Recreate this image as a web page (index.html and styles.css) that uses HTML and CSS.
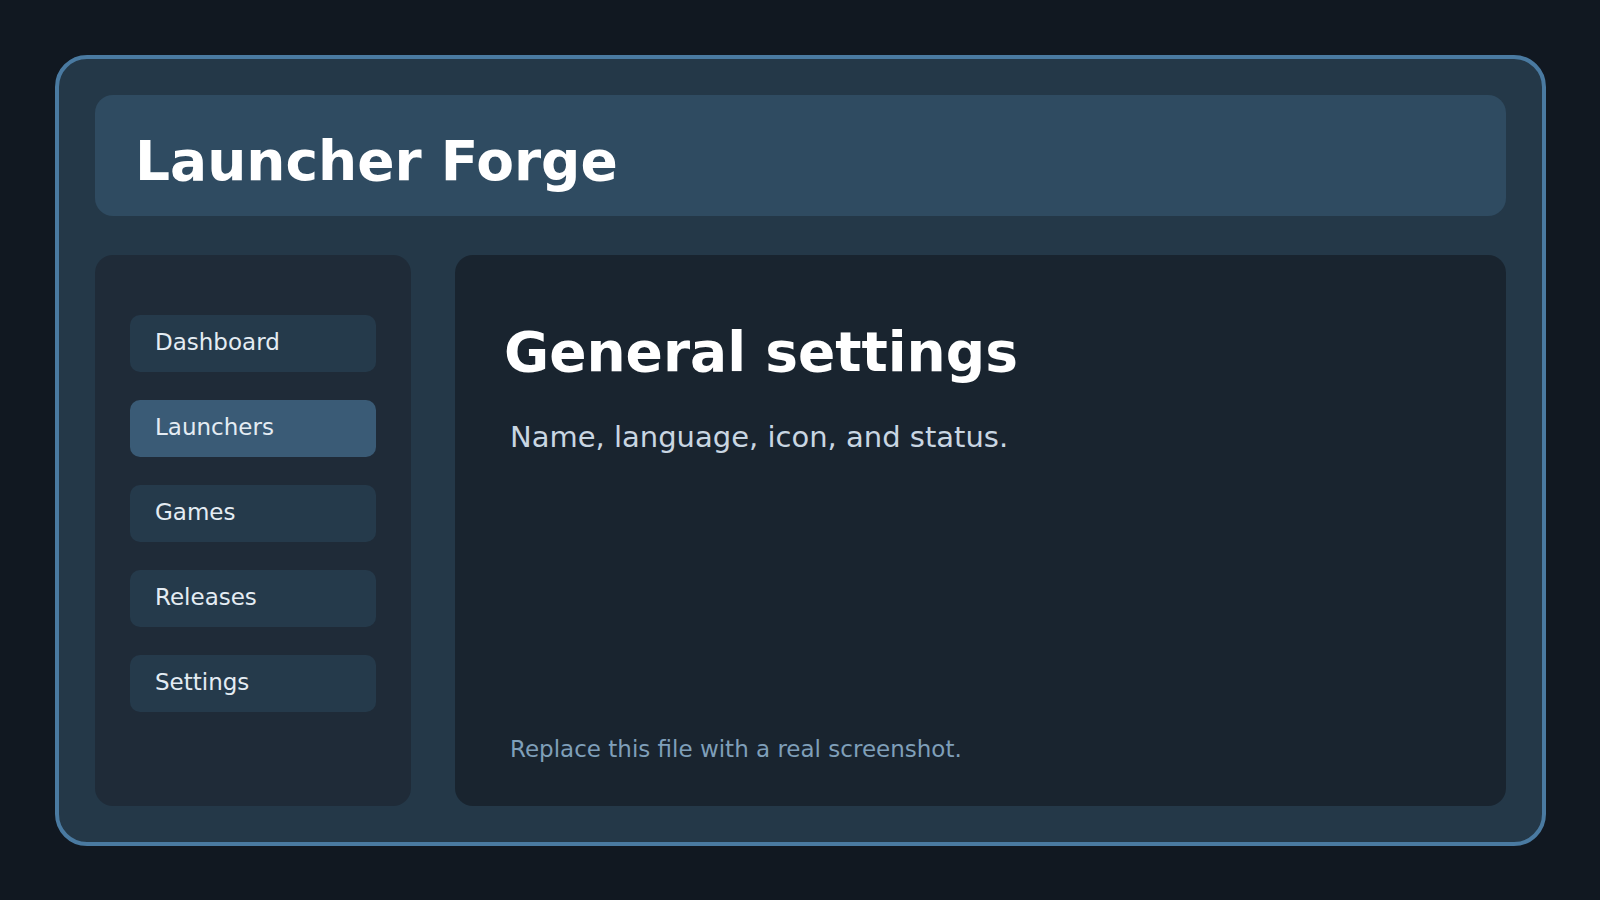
FILE: index.html
```html
<!DOCTYPE html>
<html lang="en">
<head>
  <meta charset="UTF-8">
  <title>Launcher Forge</title>
  <link rel="stylesheet" href="styles.css">
</head>
<body>
<div class="frame">
  <div class="header">
    <h1>Launcher Forge</h1>
  </div>
  <div class="body">
    <ul class="nav">
      <li>Dashboard</li>
      <li class="current">Launchers</li>
      <li>Games</li>
      <li>Releases</li>
      <li>Settings</li>
    </ul>
    <div class="main">
      <h2>General settings</h2>
      <p class="sub">Name, language, icon, and status.</p>
      <p class="note">Replace this file with a real screenshot.</p>
    </div>
  </div>
</div>
</body>
</html>
```

FILE: styles.css
```css
* {
  margin: 0;
  padding: 0;
  box-sizing: border-box;
}

ul {
  list-style: none
}

body {
  background-color: #111821;
  font-family: "DejaVu Sans", sans-serif;
  width: 1600px;
  height: 900px;
  overflow: hidden;
}

.frame {
  margin: 55px 0 0 55px;
  width: 1491px;
  height: 791px;
  padding: 36px;
  border: 4px solid #4a7aa1;
  border-radius: 32px;
  background-color: #243848;
  display: flex;
  flex-direction: column;
  gap: 39px;
}

.header {
  height: 121px;
  padding: 38px 40px 27px;
  background-color: #2f4b61;
  border-radius: 18px;
}

.header h1 {
  font-size: 55px;
  line-height: 56px;
  font-weight: bold;
  color: #fff;
}

.body {
  flex: 1;
  display: flex;
  gap: 44px;
}

.nav {
  width: 316px;
  padding: 60px 35px;
  background-color: #1f2b38;
  border-radius: 18px;
  display: flex;
  flex-direction: column;
  gap: 28px;
}

.nav li {
  height: 57px;
  padding: 14px 25px 17px;
  font-size: 23px;
  line-height: 26px;
  color: #e4ecf3;
  background-color: #253a4b;
  border-radius: 10px;
}

.nav li.current {
  background-color: #3a5b76;
}

.main {
  flex: 1;
  padding: 69px 40px 43px 49px;
  background-color: #19242f;
  border-radius: 18px;
  display: flex;
  flex-direction: column;
}

.main h2 {
  font-size: 55px;
  line-height: 56px;
  font-weight: bold;
  color: #fff;
}

.sub {
  margin: 40px 0 0 6px;
  font-size: 29px;
  line-height: 34px;
  color: #c9d6e2;
}

.note {
  margin: auto 0 0 6px;
  font-size: 23px;
  line-height: 28px;
  color: #7f9fb9;
}
```
